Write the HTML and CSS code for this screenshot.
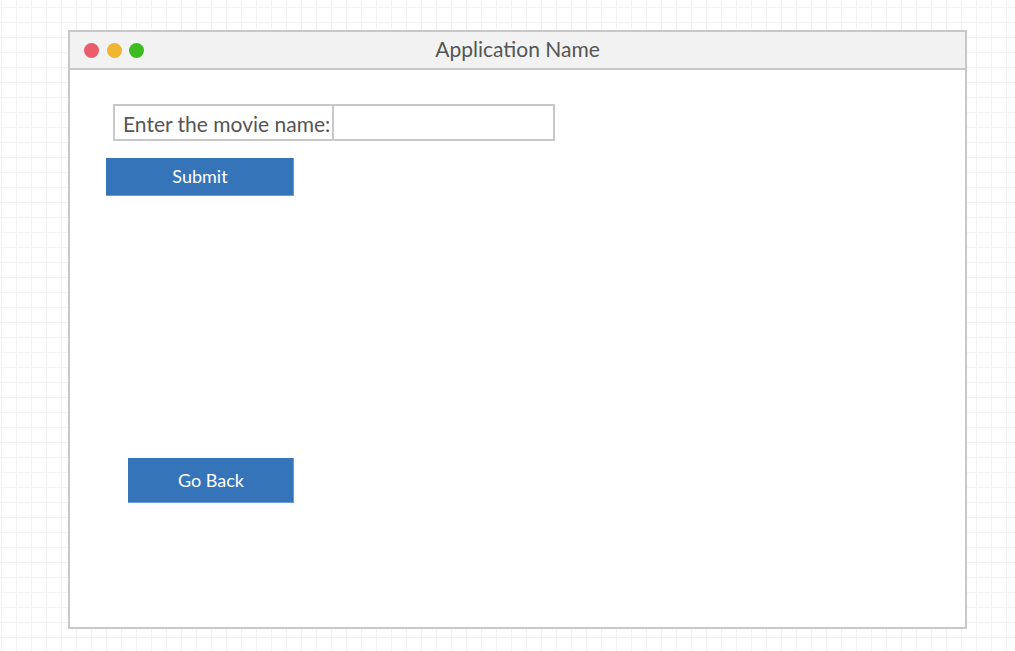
FILE: index.html
```html
<!DOCTYPE html>
<html>
<head>
<meta charset="utf-8">
<title>Application Name</title>
<link rel="stylesheet" href="styles.css">
</head>
<body>
<div class="window">
  <div class="titlebar">
    <div class="dots">
      <span class="dot red"></span>
      <span class="dot yellow"></span>
      <span class="dot green"></span>
    </div>
    <div class="title">Application Name</div>
  </div>
  <div class="content">
    <div class="field">
      <label class="label">Enter the movie name:</label>
      <input class="input" type="text">
    </div>
    <button class="btn submit">Submit</button>
    <button class="btn back">Go Back</button>
  </div>
</div>
</body>
</html>
```
FILE: styles.css
```css
html, body {
  margin: 0;
  padding: 0;
}
body {
  width: 1015px;
  height: 651px;
  overflow: hidden;
  background-color: #ffffff;
  background-image:
    linear-gradient(to right, #f1f1f1 1px, transparent 1px),
    linear-gradient(to bottom, #f1f1f1 1px, transparent 1px);
  background-size: 15px 15px;
  background-position: 1px 7px;
  font-family: Lato, "Liberation Sans", sans-serif;
  padding-top: 30px;
  box-sizing: border-box;
}
.window {
  margin-left: 68px;
  width: 899px;
  height: 599px;
  box-sizing: border-box;
  border: 2px solid #c8c8c8;
  background: #ffffff;
  display: flex;
  flex-direction: column;
}
.titlebar {
  height: 38px;
  box-sizing: border-box;
  border-bottom: 2px solid #c8c8c8;
  background: #f2f2f2;
  display: flex;
  align-items: center;
  position: relative;
}
.dots {
  display: flex;
  gap: 7.5px;
  margin-left: 14px;
  margin-top: 1px;
}
.dot {
  width: 15px;
  height: 15px;
  border-radius: 50%;
  display: block;
}
.red { background: #ec5d6b; }
.yellow { background: #f0b631; }
.green { background: #3cbc1f; }
.title {
  position: absolute;
  left: 0;
  right: 0;
  text-align: center;
  font-size: 21px;
  color: #555555;
  top: 4px;
}
.content {
  flex: 1;
  display: flex;
  flex-direction: column;
  align-items: flex-start;
  padding-top: 34px;
  padding-left: 36px;
}
.field {
  margin-left: 7px;
  display: flex;
  width: 442px;
  height: 37px;
  box-sizing: border-box;
  border: 2px solid #c8c8c8;
}
.label {
  width: 217px;
  box-sizing: border-box;
  padding-left: 8px;
  font-size: 21px;
  color: #555555;
  line-height: 35px;
  white-space: nowrap;
}
.input {
  flex: 1;
  border: none;
  border-left: 2px solid #c8c8c8;
  margin: 0;
  padding: 0;
  outline: none;
  background: #ffffff;
}
.btn {
  border: none;
  margin: 0;
  padding: 0 0 2px 0;
  background: #3574b9;
  color: #ffffff;
  font-family: Lato, "Liberation Sans", sans-serif;
  font-size: 18px;
  box-shadow: inset -1px -1px 0 #6a9bd6;
}
.submit {
  margin-top: 17px;
  width: 188px;
  height: 38px;
}
.back {
  margin-top: 262px;
  margin-left: 22px;
  width: 166px;
  height: 45px;
}
```
